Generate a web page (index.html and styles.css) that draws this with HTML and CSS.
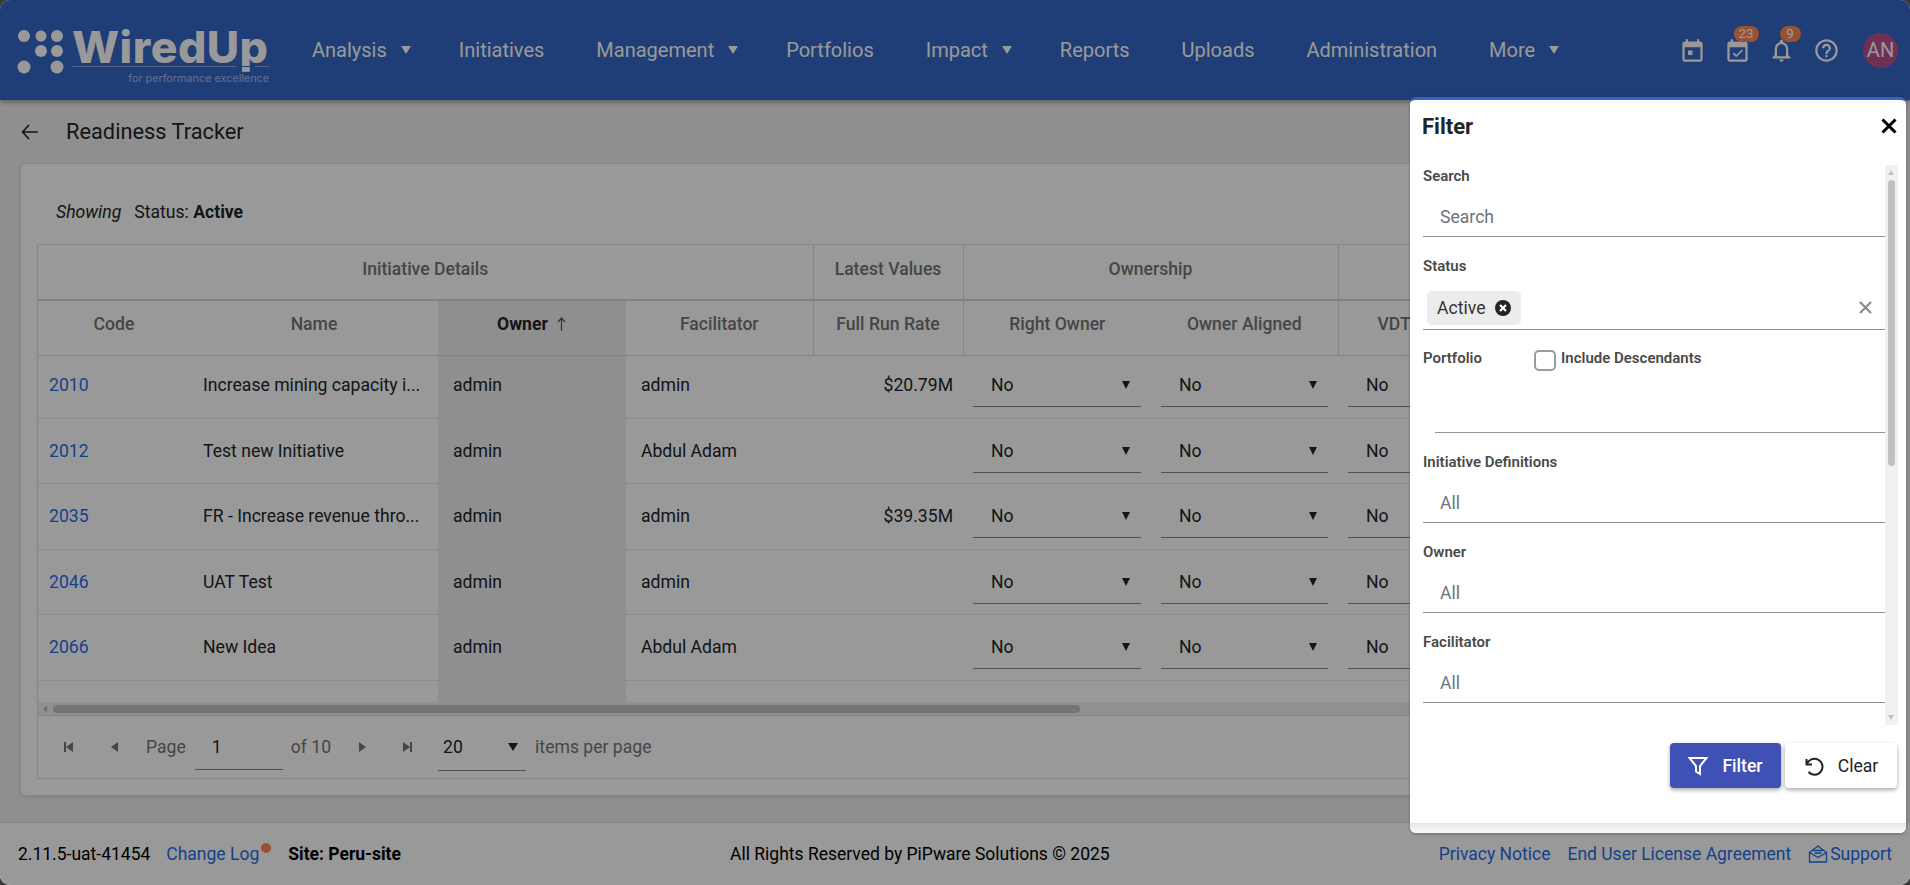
FILE: index.html
```html
<!DOCTYPE html>
<html lang="en">
<head>
<meta charset="utf-8">
<title>Readiness Tracker</title>
<link rel="stylesheet" href="styles.css">
</head>
<body>
<div class="app">
  <header class="topbar">
    <div class="logo">
      <svg class="logo-dots" viewBox="0 0 56 56" width="56" height="56" aria-hidden="true">
        <circle cx="7" cy="8" r="6"/><circle cx="24" cy="8" r="5.5"/><circle cx="40" cy="8" r="6"/>
        <circle cx="24" cy="23" r="6"/><circle cx="40" cy="23" r="6"/>
        <circle cx="7" cy="39" r="6.5"/><circle cx="40" cy="39" r="6.5"/>
      </svg>
      <div class="logo-words">
        <span class="logo-name">WiredUp</span>
        <span class="logo-tag">for performance excellence</span>
      </div>
    </div>
    <nav class="nav">
      <a class="nav-item has-caret">Analysis</a>
      <a class="nav-item">Initiatives</a>
      <a class="nav-item has-caret">Management</a>
      <a class="nav-item">Portfolios</a>
      <a class="nav-item has-caret">Impact</a>
      <a class="nav-item">Reports</a>
      <a class="nav-item">Uploads</a>
      <a class="nav-item">Administration</a>
      <a class="nav-item has-caret">More</a>
    </nav>
    <div class="top-icons">
      <span class="top-icon"><svg viewBox="0 0 24 24"><path d="M19 4h-1V2h-2v2H8V2H6v2H5c-1.1 0-2 .9-2 2v14c0 1.1.9 2 2 2h14c1.1 0 2-.9 2-2V6c0-1.1-.9-2-2-2zm0 16H5V9h14v11zM8 12h4v4H8z"/></svg></span>
      <span class="top-icon"><svg viewBox="0 0 24 24"><path d="M16.9 12.1l-1.1-1.1-4.9 4.9-2.1-2.1-1.1 1.1 3.2 3.2zM19 4h-1V2h-2v2H8V2H6v2H5c-1.1 0-2 .9-2 2v14c0 1.1.9 2 2 2h14c1.1 0 2-.9 2-2V6c0-1.1-.9-2-2-2zm0 16H5V9h14v11z"/></svg><b class="badge badge-wide">23</b></span>
      <span class="top-icon"><svg viewBox="0 0 24 24"><path d="M12 22c1.1 0 2-.9 2-2h-4c0 1.1.9 2 2 2zm6-6v-5c0-3.07-1.63-5.64-4.5-6.32V4c0-.83-.67-1.5-1.5-1.5s-1.5.67-1.5 1.5v.68C7.64 5.36 6 7.92 6 11v5l-2 2v1h16v-1l-2-2zm-2 1H8v-6c0-2.48 1.51-4.5 4-4.5s4 2.02 4 4.5v6z"/></svg><b class="badge">9</b></span>
      <span class="top-icon"><svg viewBox="0 0 24 24"><path d="M11 18h2v-2h-2v2zm1-16C6.48 2 2 6.48 2 12s4.48 10 10 10 10-4.48 10-10S17.52 2 12 2zm0 18c-4.41 0-8-3.59-8-8s3.59-8 8-8 8 3.59 8 8-3.59 8-8 8zm0-14c-2.21 0-4 1.79-4 4h2c0-1.1.9-2 2-2s2 .9 2 2c0 2-3 1.75-3 5h2c0-2.25 3-2.5 3-5 0-2.21-1.79-4-4-4z"/></svg></span>
      <span class="avatar">AN</span>
    </div>
  </header>

  <main class="page">
    <div class="page-title">
      <svg class="back" viewBox="0 0 18 16" width="18" height="16" aria-hidden="true"><path d="M17 8H1.500M8 1L1.500 8 8 15"/></svg>
      <h1>Readiness Tracker</h1>
    </div>
    <section class="card">
      <p class="showing"><i>Showing</i><span>Status: <b>Active</b></span></p>
      <div class="grid">
        <div class="grid-scroll">
          <table class="table">
            <colgroup>
              <col class="c-code"><col class="c-name"><col class="c-owner"><col class="c-fac"><col class="c-run"><col class="c-sel"><col class="c-sel2"><col class="c-sel">
            </colgroup>
            <thead>
              <tr class="group-row">
                <th colspan="4" class="edge">Initiative Details</th>
                <th class="edge">Latest Values</th>
                <th colspan="2" class="edge">Ownership</th>
                <th></th>
              </tr>
              <tr class="head-row">
                <th>Code</th><th>Name</th><th class="sorted">Owner<svg class="sort-arrow" viewBox="0 0 11 14" width="11" height="14" aria-hidden="true"><path d="M5.500 14V1.500M2 5l3.500-4L9 5"/></svg></th><th class="edge">Facilitator</th>
                <th class="edge">Full Run Rate</th><th>Right Owner</th><th class="edge">Owner Aligned</th><th class="vdt">VDT</th>
              </tr>
            </thead>
            <tbody>
              <tr>
                <td><a class="link">2010</a></td><td class="name">Increase mining capacity i...</td><td class="sorted">admin</td><td class="fac">admin</td><td class="num">$20.79M</td>
                <td><span class="sel">No</span></td><td><span class="sel">No</span></td><td><span class="sel">No</span></td>
              </tr>
              <tr>
                <td><a class="link">2012</a></td><td class="name">Test new Initiative</td><td class="sorted">admin</td><td class="fac">Abdul Adam</td><td class="num"></td>
                <td><span class="sel">No</span></td><td><span class="sel">No</span></td><td><span class="sel">No</span></td>
              </tr>
              <tr>
                <td><a class="link">2035</a></td><td class="name">FR - Increase revenue thro...</td><td class="sorted">admin</td><td class="fac">admin</td><td class="num">$39.35M</td>
                <td><span class="sel">No</span></td><td><span class="sel">No</span></td><td><span class="sel">No</span></td>
              </tr>
              <tr>
                <td><a class="link">2046</a></td><td class="name">UAT Test</td><td class="sorted">admin</td><td class="fac">admin</td><td class="num"></td>
                <td><span class="sel">No</span></td><td><span class="sel">No</span></td><td><span class="sel">No</span></td>
              </tr>
              <tr>
                <td><a class="link">2066</a></td><td class="name">New Idea</td><td class="sorted">admin</td><td class="fac">Abdul Adam</td><td class="num"></td>
                <td><span class="sel">No</span></td><td><span class="sel">No</span></td><td><span class="sel">No</span></td>
              </tr>
              <tr>
                <td></td><td></td><td class="sorted"></td><td></td><td></td><td></td><td></td><td></td>
              </tr>
            </tbody>
          </table>
        </div>
        <div class="hscroll"><span class="hscroll-arrow"></span><span class="hscroll-thumb"></span></div>
        <div class="pager">
          <button class="pg-btn pg-first" aria-label="First"></button>
          <button class="pg-btn pg-prev" aria-label="Previous"></button>
          <span class="pg-text pg-page">Page</span>
          <span class="pg-input">1</span>
          <span class="pg-text pg-of">of 10</span>
          <button class="pg-btn pg-next" aria-label="Next"></button>
          <button class="pg-btn pg-last" aria-label="Last"></button>
          <span class="pg-size">20</span>
          <span class="pg-text pg-items">items per page</span>
        </div>
      </div>
    </section>
  </main>

  <footer class="footer">
    <div class="foot-left">
      <span>2.11.5-uat-41454</span>
      <a class="link changelog">Change Log</a>
      <b>Site: Peru-site</b>
    </div>
    <div class="foot-center">All Rights Reserved by PiPware Solutions © 2025</div>
    <div class="foot-right">
      <a class="link">Privacy Notice</a>
      <a class="link">End User License Agreement</a>
      <a class="link support"><svg viewBox="0 0 20 20" width="20" height="20" aria-hidden="true"><path d="M1.500 8.500L10 2l8.500 6.500V18h-17zM1.500 8.500L10 13.500l8.500-5M5.500 6.500h9M6.500 9h7"/></svg>Support</a>
    </div>
  </footer>

  <div class="scrim"></div>

  <aside class="drawer">
    <div class="drawer-head">
      <h2>Filter</h2>
      <svg class="drawer-close" viewBox="0 0 16 16" width="16" height="16" aria-hidden="true"><path d="M1.500 1.500l13 13M14.500 1.500l-13 13"/></svg>
    </div>
    <div class="drawer-scroll">
      <div class="drawer-fields">
        <div class="field">
          <label>Search</label>
          <div class="control"><span class="ph">Search</span></div>
        </div>
        <div class="field field-status">
          <label>Status</label>
          <div class="control control-chip">
            <span class="chip">Active
              <svg viewBox="0 0 16 16" width="16" height="16" aria-hidden="true"><circle cx="8" cy="8" r="8" class="chip-disc"/><path d="M5 5l6 6M11 5l-6 6" class="chip-x"/></svg>
            </span>
            <svg class="clear-x" viewBox="0 0 13 13" width="13" height="13" aria-hidden="true"><path d="M1 1l11 11M12 1L1 12"/></svg>
          </div>
        </div>
        <div class="field field-portfolio">
          <div class="portfolio-row">
            <label>Portfolio</label>
            <span class="check"></span>
            <label>Include Descendants</label>
          </div>
          <div class="control control-indent"></div>
        </div>
        <div class="field">
          <label>Initiative Definitions</label>
          <div class="control"><span class="ph">All</span></div>
        </div>
        <div class="field">
          <label>Owner</label>
          <div class="control"><span class="ph">All</span></div>
        </div>
        <div class="field">
          <label>Facilitator</label>
          <div class="control"><span class="ph">All</span></div>
        </div>
      </div>
      <div class="vscroll"><span class="v-up"></span><span class="v-thumb"></span><span class="v-down"></span></div>
    </div>
    <div class="drawer-actions">
      <button class="btn btn-primary">
        <svg viewBox="0 0 20 20" width="20" height="20" aria-hidden="true"><path d="M1.500 2h17l-6.500 8v8l-4-2.500V10z"/></svg>Filter
      </button>
      <button class="btn btn-plain">
        <svg viewBox="0 0 20 20" width="20" height="20" aria-hidden="true"><path d="M2.500 3v5.500H8M2.800 8.500A8 8 0 1 1 4.500 16"/></svg>Clear
      </button>
    </div>
    <div class="drawer-foot"></div>
  </aside>
</div>
</body>
</html>
```
FILE: styles.css
```css
* { box-sizing: border-box; }
html, body { margin: 0; height: 100%; background: #3a3a3a; }
body { font-family: Roboto, "Liberation Sans", sans-serif; font-size: 17.600px; color: #212529; overflow: hidden; }
.app { position: relative; width: 1910px; height: 885px; display: flex; flex-direction: column; background: #eeeeee; border-radius: 10px; overflow: hidden; }

/* top bar */
.topbar { flex: 0 0 100px; display: flex; align-items: center; background: #3566c6; color: #fff; padding-left: 17px; box-shadow: 0 2px 5px rgba(0,0,0,.35); position: relative; }
.logo { display: flex; align-items: flex-start; width: 295px; height: 56px; }
.logo-dots { fill: #fff; margin-top: 6px; flex: none; }
.logo-words { display: flex; flex-direction: column; position: relative; width: 196px; }
.logo-words::after { content: ""; position: absolute; left: 163px; top: 44px; width: 19px; height: 1px; background: #3566c6; }
.logo-name { font-family: Inter, sans-serif; font-weight: 800; font-size: 44.500px; line-height: 50px; letter-spacing: .5px; height: 45px; margin-left: -1px; border-bottom: 1px solid #8fa9dd; white-space: nowrap; }
.logo-tag { font-family: Inter, sans-serif; font-size: 10.800px; line-height: 14px; text-align: right; margin-top: 5px; color: #a9bde8; white-space: nowrap; }
.nav { display: flex; align-items: center; }
.nav-item { font-size: 20px; color: #fff; margin-right: 52px; white-space: nowrap; }
.has-caret { margin-right: 48px; }
.has-caret::after { content: ""; display: inline-block; margin-left: 14px; border-left: 5px solid transparent; border-right: 5px solid transparent; border-top: 8px solid #fff; vertical-align: 3px; }
.top-icons { margin-left: auto; display: flex; align-items: center; padding-right: 12px; }
.top-icon { position: relative; width: 27px; height: 27px; margin-right: 17.500px; display: block; }
.top-icon svg { width: 27px; height: 27px; fill: #fff; display: block; }
.badge { position: absolute; left: 11.500px; top: -10.500px; width: 21px; height: 16px; border-radius: 8px; background: #ff8755; color: #fff; font-size: 13.500px; font-weight: 400; line-height: 15px; text-align: center; }
.badge-wide { left: 10px; width: 25px; }
.avatar { width: 35px; height: 35px; border-radius: 50%; background: #bb5090; color: #fff; font-size: 20px; line-height: 35px; text-align: center; margin-left: 6px; }

/* page */
.page { flex: 1; min-height: 0; padding: 0 20px; }
.page-title { height: 63px; display: flex; align-items: center; }
.back { fill: none; stroke: #212529; stroke-width: 1.600; margin-left: 1px; margin-right: 27px; }
h1 { margin: 0; font-size: 21.800px; font-weight: 400; color: #212529; }
.card { height: 633px; background: #fff; border: 1px solid #e4e4e4; border-radius: 6px; padding: 0 16px; box-shadow: 0 1px 3px rgba(0,0,0,.12); }
.showing { margin: 0; height: 80px; display: flex; align-items: center; padding: 15px 0 0 19px; gap: 13px; }
.grid { height: 535px; border: 1px solid #e0e0e0; border-right: 0; display: flex; flex-direction: column; }
.grid-scroll { height: 457px; flex: none; overflow: hidden; }
.table { table-layout: fixed; border-collapse: collapse; width: 1488px; }
.c-code { width: 152px; } .c-name { width: 248px; } .c-owner { width: 188px; } .c-fac { width: 187px; }
.c-run { width: 150px; } .c-sel { width: 188px; } .c-sel2 { width: 187px; }
.table th { font-size: 17.600px; font-weight: 500; color: #757575; text-align: center; padding: 0 4px; white-space: nowrap; }
.group-row th { height: 55px; padding-bottom: 7px; border-bottom: 2px solid #d8d8d8; }
.head-row th { height: 55px; padding-bottom: 7px; border-bottom: 1px solid #dedede; }
.table th.edge { border-right: 1px solid #dedede; }
.table th.sorted { background: #eeeeee; color: #212529; font-weight: 700; }
.table th.vdt { text-align: left; padding-left: 39px; }
.sort-arrow { fill: none; stroke: #5c5c5c; stroke-width: 1.300; margin-left: 8px; vertical-align: -1px; }
.table td { height: 65.500px; padding: 0 12px 0 11px; border-bottom: 1px solid #e9e9e9; white-space: nowrap; overflow: hidden; }
.table tbody tr:first-child td { height: 63px; padding-bottom: 3px; }
.table td.name { padding-left: 13px; }
.table td.sorted, .table td.fac { padding-left: 15px; }
.table td.num { text-align: right; padding-right: 10px; }
.table td.sorted { background: #eeeeee; }
.link { color: #1f6fe8; }
.sel { position: relative; display: block; height: 44px; line-height: 44px; margin: 0 -2px 0 -1px; padding-left: 18px; border-bottom: 1px solid #888; }
.sel::after { content: ""; position: absolute; right: 11px; top: 18px; border-left: 4.500px solid transparent; border-right: 4.500px solid transparent; border-top: 8px solid #212529; }

.hscroll { height: 14px; flex: none; background: #f1f1f1; position: relative; border-bottom: 1px solid #dedede; }
.hscroll-arrow { position: absolute; left: 5px; top: 4px; border-top: 3.500px solid transparent; border-bottom: 3.500px solid transparent; border-right: 4px solid #b5b5b5; }
.hscroll-thumb { position: absolute; left: 15px; top: 3px; width: 1027px; height: 8px; border-radius: 4px; background: #c2c2c2; }

.pager { flex: 1; display: flex; align-items: center; padding-left: 26px; padding-bottom: 1px; color: #757575; }
.pg-btn { border: 0; padding: 0; background: none; width: 12px; height: 12px; position: relative; flex: none; }
.pg-btn::before { content: ""; position: absolute; top: 1px; border-top: 5px solid transparent; border-bottom: 5px solid transparent; }
.pg-first::before, .pg-prev::before { left: 2px; border-right: 7px solid #757575; }
.pg-next::before, .pg-last::before { left: 3px; border-left: 7px solid #757575; }
.pg-first::after, .pg-last::after { content: ""; position: absolute; top: 1px; width: 2px; height: 10px; background: #757575; }
.pg-first::after { left: 0; }
.pg-last::after { left: 10px; }
.pg-prev { margin-left: 33px; }
.pg-page { margin-left: 25px; }
.pg-input { width: 88px; height: 40px; margin: 6px 0 0 9px; padding: 7px 0 0 17px; border-bottom: 1px solid #888; color: #212529; flex: none; }
.pg-of { margin-left: 8px; }
.pg-next { margin-left: 25px; }
.pg-last { margin-left: 32px; }
.pg-size { width: 88px; height: 42px; margin: 6px 0 0 26px; padding: 8px 0 0 5px; border-bottom: 1px solid #888; color: #212529; flex: none; position: relative; }
.pg-size::after { content: ""; position: absolute; right: 8px; top: 14px; border-left: 5px solid transparent; border-right: 5px solid transparent; border-top: 8px solid #212529; }
.pg-items { margin-left: 9px; }

/* footer */
.footer { flex: 0 0 63px; background: #fff; border-top: 1px solid #e0e0e0; display: flex; justify-content: space-between; align-items: center; padding: 0 18px; color: #000; font-size: 17.500px; }
.foot-left { display: flex; gap: 16px; align-items: center; }
.foot-left b { margin-left: 13px; }
.changelog { position: relative; }
.changelog::after { content: ""; position: absolute; right: -12px; top: -1px; width: 10px; height: 10px; border-radius: 50%; background: #ff8755; }
.foot-right { display: flex; gap: 17px; }
.support { display: flex; align-items: center; gap: 2px; }
.support svg { fill: none; stroke: #1f6fe8; stroke-width: 1.300; }

/* overlay */
.scrim { position: absolute; inset: 0; background: rgba(0,0,0,.4); }

/* filter drawer */
.drawer { position: absolute; left: 1410px; top: 97px; width: 496px; height: 736px; background: #fff; border-top: 3px solid #3566c6; border-radius: 6px; display: flex; flex-direction: column; box-shadow: 0 1px 3px rgba(0,0,0,.3); overflow: hidden; }
.drawer-head { flex: 0 0 65px; display: flex; align-items: center; justify-content: space-between; padding: 0 9px 13px 12px; }
h2 { margin: 0; font-size: 22px; font-weight: 700; color: #212529; }
.drawer-close { fill: none; stroke: #000; stroke-width: 3; }
.drawer-scroll { flex: 0 0 560px; display: flex; overflow: hidden; }
.drawer-fields { flex: 1; padding-left: 13px; }
.vscroll { flex: 0 0 13px; margin-right: 8px; background: #f1f1f1; position: relative; }
.v-thumb { position: absolute; left: 3px; top: 15px; width: 7px; height: 286px; border-radius: 4px; background: #c1c1c1; }
.v-up, .v-down { position: absolute; left: 3px; border-left: 3.500px solid transparent; border-right: 3.500px solid transparent; }
.v-up { top: 5px; border-bottom: 5px solid #c1c1c1; }
.v-down { bottom: 5px; border-top: 5px solid #c1c1c1; }
.field { height: 90px; }
.field label { display: block; font-size: 15px; font-weight: 600; line-height: 22px; color: #4a4a4a; }
.control { height: 50px; padding: 18px 0 0 17px; border-bottom: 1px solid #949494; }
.ph { color: #6c757d; line-height: 24px; display: block; }
.field-status { height: 76px; }
.control-chip { display: flex; align-items: flex-start; justify-content: space-between; padding: 14px 13px 0 4px; height: 53px; }
.chip { display: flex; align-items: center; gap: 10px; height: 34px; padding: 0 10px; background: #ececec; border-radius: 5px; color: #333; }
.chip-disc { fill: #212529; }
.chip-x { stroke: #fff; stroke-width: 2.200; fill: none; }
.clear-x { fill: none; stroke: #8a8a8a; stroke-width: 2.200; margin-top: 10px; }
.field-portfolio { height: 120px; }
.portfolio-row { display: flex; align-items: flex-start; height: 50px; padding-top: 16px; }
.portfolio-row label:first-child { width: 111px; }
.check { width: 22px; height: 21px; border: 2px solid #9b9b9b; border-radius: 5px; flex: none; margin: 3px 5px 0 0; }
.control-indent { margin-left: 12px; height: 52px; padding: 0; }
.drawer-actions { flex: 0 0 98px; display: flex; justify-content: flex-end; align-items: flex-start; gap: 4px; padding: 18px 9px 0 0; }
.btn { width: 112px; height: 45px; border: 0; border-radius: 4px; font: 500 17.600px Roboto, sans-serif; display: flex; align-items: center; justify-content: center; gap: 14px; box-shadow: 0 2px 4px rgba(0,0,0,.35); }
.btn svg { fill: none; stroke-width: 2; flex: none; }
.btn-primary { width: 111px; background: #3f51b5; color: #fff; }
.btn-primary svg { stroke: #fff; }
.btn-plain { background: #fff; color: #212529; font-weight: 400; }
.btn-plain svg { stroke: #212529; }
.drawer-foot { flex: 1; background: linear-gradient(#e4e4e4, #fbfbfb); }
```
